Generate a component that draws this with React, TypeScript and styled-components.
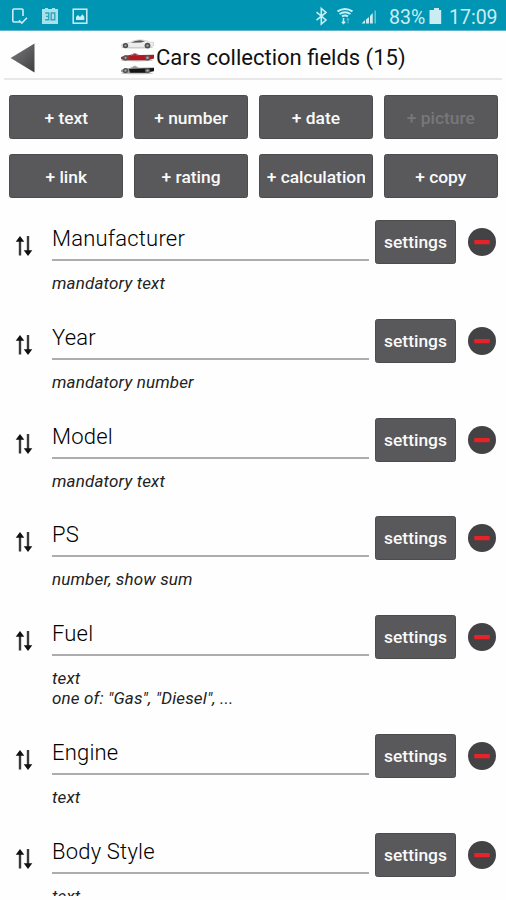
import React from "react";
import styled, { createGlobalStyle } from "styled-components";

const Global = createGlobalStyle`
  * { box-sizing: border-box; }
  html, body { margin: 0; padding: 0; background: #fefefe; }
  body { font-family: Roboto, "Liberation Sans", sans-serif; color: #111; }
`;

const Screen = styled.div`
  width: 506px;
  height: 900px;
  overflow: hidden;
  background: #fefefe;
`;

const StatusBar = styled.div`
  height: 31px;
  background: #0095b3;
  border-bottom: 1px solid #5fb5cc;
  display: flex;
  align-items: center;
  justify-content: space-between;
  padding: 2px 10px 0 11px;
  color: #c9edf3;
`;

const StatusGroup = styled.div<{ $gap: number }>`
  display: flex;
  align-items: center;
  gap: ${(p) => p.$gap}px;
`;

const StatusText = styled.span<{ $width: number }>`
  font-size: 19.5px;
  line-height: 28px;
  margin-top: 3px;
  width: ${(p) => p.$width}px;
  white-space: nowrap;
`;

const Header = styled.header`
  height: 49px;
  margin: 0 4px;
  border-bottom: 2px solid #e8e8e8;
  display: flex;
  align-items: center;
  padding-left: 6px;
`;

const BackIcon = styled.svg`
  display: block;
  width: 26px;
  height: 30px;
  margin-top: 6px;
`;

const Title = styled.h1`
  display: flex;
  align-items: center;
  gap: 1px;
  margin: 4px 0 0 84px;
  font-size: 22px;
  font-weight: 400;
  line-height: 36px;
  white-space: nowrap;
`;

const TitleText = styled.span`
  padding-top: 2px;
`;

const Actions = styled.div`
  display: grid;
  grid-template-columns: repeat(4, 1fr);
  gap: 15px 10.4px;
  padding: 15px 8px 0 9px;
`;

const Button = styled.button<{ $disabled?: boolean }>`
  display: block;
  min-width: 0;
  height: 44px;
  border: 1px solid #4c4c4e;
  border-radius: 2.5px;
  padding: 0 7px 0 7px;
  background: #59595b;
  color: ${(p) => (p.$disabled ? "#77777a" : "#fafafa")};
  font: 500 17.4px/44px Roboto, "Liberation Sans", sans-serif;
  text-align: center;
`;

const ButtonLabel = styled.span`
  display: block;
  overflow: hidden;
  white-space: nowrap;
`;

const FieldList = styled.div`
  height: 676px;
  margin-top: 22px;
  overflow: hidden;
`;

const FieldRow = styled.div<{ $tall?: boolean }>`
  display: grid;
  grid-template-columns: 36px 317px 81px 28px;
  column-gap: 6px;
  height: ${(p) => (p.$tall ? 118.75 : 98.75)}px;
  padding-left: 10px;
  align-items: start;
`;

const SortIcon = styled.svg`
  display: block;
  width: 18px;
  height: 22px;
  margin: 15px 0 0 5px;
`;

const FieldName = styled.div`
  height: 41px;
  border-bottom: 2px solid #adadad;
  font-size: 22px;
  font-weight: 300;
  line-height: 37px;
  letter-spacing: 0.2px;
  color: #000;
`;

const FieldNote = styled.div`
  margin-top: 12px;
  font-size: 17px;
  font-style: italic;
  line-height: 20px;
  letter-spacing: 0.15px;
  white-space: pre-line;
  color: #222;
`;

const SettingsButton = styled(Button)`
  padding: 0;
  line-height: 43px;
`;

const RemoveIcon = styled.svg`
  display: block;
  width: 30px;
  height: 30px;
  margin: 7px 0 0 5px;
`;

const CarsSvg = styled.svg`
  display: block;
  width: 35px;
  height: 36px;
  flex: none;
`;

function Car({ y, body, glass }: { y: number; body: string; glass: string }) {
  return (
    <g transform={`translate(0 ${y})`}>
      <ellipse cx="17" cy="8.3" rx="16" ry="1.1" fill="#999" opacity=".5" />
      <path d="M1 6 Q2 3.8 9 3.5 Q14 .5 20 .6 Q26 .8 30 3 L33.5 3 L33.5 6.5 L29 8.2 L3 8.2Z" fill={body} stroke="#b9b9b9" strokeWidth=".5" />
      <path d="M11 3.5 Q15 1 20 1 L25 2 L21 3.4Z" fill={glass} />
      <circle cx="5.5" cy="6.4" r="2.7" fill="#4d4d50" />
      <circle cx="5.5" cy="6.4" r="1.1" fill="#a5a5a5" />
      <circle cx="27.5" cy="6.4" r="2.9" fill="#4d4d50" />
      <circle cx="27.5" cy="6.4" r="1.2" fill="#a5a5a5" />
    </g>
  );
}

function LowCar({ y, body, trim }: { y: number; body: string; trim: string }) {
  return (
    <g transform={`translate(0 ${y})`}>
      <ellipse cx="17" cy="8" rx="16" ry="1" fill="#888" opacity=".5" />
      <path d="M1 4.7 Q5 2.7 10 2.7 L15 .7 L19 2.5 L34 2.3 L34 6 L28 7.8 L4 7.8 L1 6.5Z" fill={trim} />
      <path d="M9 3.8 L34 2.7 L34 5.7 L25 7.6 L10 7.6Z" fill={body} />
      <path d="M11 2.8 L15 .8 L18 2.8" fill="none" stroke="#aaa" strokeWidth=".9" />
      <circle cx="5.5" cy="5.4" r="2.6" fill="#555" />
      <circle cx="5.5" cy="5.4" r="1.1" fill="#aaa" />
      <circle cx="27.5" cy="5.4" r="2.7" fill="#555" />
      <circle cx="27.5" cy="5.4" r="1.2" fill="#aaa" />
    </g>
  );
}

const CarsIcon = () => (
  <CarsSvg viewBox="0 0 35 36">
    <Car y={0.2} body="#ededed" glass="#555" />
    <LowCar y={13.4} body="#b51622" trim="#933" />
    <LowCar y={26.2} body="#151517" trim="#999" />
  </CarsSvg>
);

const Sort = () => (
  <SortIcon viewBox="0 0 18 22" fill="none" stroke="#111" strokeWidth="2.4">
    <path d="M5 20.5V3M13 1V19" stroke="#3a3a3a" />
    <path d="M.7 6.8L5 1L9.3 6.8ZM8.7 15.2L13 21L17.3 15.2Z" fill="#111" stroke="none" />
  </SortIcon>
);

const Remove = () => (
  <RemoveIcon viewBox="0 0 30 30">
    <circle cx="15" cy="15" r="14" fill="#434345" />
    <rect x="7.2" y="13" width="15.6" height="4.2" rx=".8" fill="#e62328" />
  </RemoveIcon>
);

const actions = ["text", "number", "date", "picture", "link", "rating", "calculation", "copy"];

const fields = [
  { name: "Manufacturer", note: "mandatory text" },
  { name: "Year", note: "mandatory number" },
  { name: "Model", note: "mandatory text" },
  { name: "PS", note: "number, show sum" },
  { name: "Fuel", note: 'text\none of: "Gas", "Diesel", ...', tall: true },
  { name: "Engine", note: "text" },
  { name: "Body Style", note: "text" },
];

export default function App() {
  return (
    <Screen>
      <Global />
      <StatusBar>
        <StatusGroup $gap={13}>
          <svg width="17" height="17" viewBox="0 0 17 17" fill="none" stroke="currentColor" strokeWidth="1.6">
            <path d="M12 8V2.2Q12 1 10.8 1H3Q1.8 1 1.8 2.2V12.8Q1.8 14 3 14H9" />
            <path d="M8 12.2L10.8 15L16 9.8" />
          </svg>
          <svg width="18" height="17" viewBox="0 0 18 17">
            <path d="M1 1H4V0H7V1H11V0H14V1H17V16H1Z" fill="#a9e0e9" />
            <path d="M4.2 5H7.7V11.8H4.2M5 8.4H7.7M10.2 5H13.8V11.8H10.2Z" fill="none" stroke="#2fa6bd" strokeWidth="1.4" />
          </svg>
          <svg width="16" height="17" viewBox="0 0 16 17">
            <rect x="1.2" y="1.2" width="13.6" height="14" fill="none" stroke="currentColor" strokeWidth="1.5" />
            <path d="M4 12V9L6 7L8 9L10.5 6.3L12.3 8.7V12Z" fill="currentColor" />
          </svg>
        </StatusGroup>
        <StatusGroup $gap={0}>
          <svg width="74" height="20" viewBox="0 0 74 20" fill="none" stroke="currentColor" strokeWidth="1.6">
            <path d="M1.5 6.2L11 14L6.3 18V2.4L11 6.4L1.5 14.2" />
            <path d="M22.5 5.3Q30 .5 37.5 5.3M24.5 8Q30 4.3 35.5 8M27 10.3Q30 8.5 33 10.3" strokeWidth="2" />
            <path d="M28.5 12V17.5M26.8 15.7L28.5 17.5L30.2 15.7" strokeWidth="1.5" />
            <path d="M33 17.5V12.5M31.7 13.8L33 12.5L34.3 13.8" strokeWidth="1" opacity=".5" />
            <path d="M46.5 17.5L50 14V17.5ZM51 13.5L54 11V17.5H51ZM55 10L57.8 7V17.5H55Z" fill="currentColor" stroke="none" />
            <path d="M60.2 4.5V17.5" opacity=".5" />
          </svg>
          <StatusText $width={38}>83%</StatusText>
          <svg width="22" height="20" viewBox="0 0 22 20" fill="currentColor">
            <path d="M5 4H7V2H12V4H14.2V18H2.5V4Z" />
          </svg>
          <StatusText $width={47}>17:09</StatusText>
        </StatusGroup>
      </StatusBar>
      <Header>
        <BackIcon viewBox="0 0 26 30">
          <defs>
            <linearGradient id="back" x1="0" y1="0" x2="1" y2="1">
              <stop offset=".3" stopColor="#6b6b6d" />
              <stop offset="1" stopColor="#3e3e40" />
            </linearGradient>
          </defs>
          <path d="M.6 15L24.5 .6V29.4Z" fill="url(#back)" />
        </BackIcon>
        <Title>
          <CarsIcon />
          <TitleText>Cars collection fields (15)</TitleText>
        </Title>
      </Header>
      <Actions>
        {actions.map((a) => (
          <Button key={a} $disabled={a === "picture"}>
            <ButtonLabel>+ {a}</ButtonLabel>
          </Button>
        ))}
      </Actions>
      <FieldList>
        {fields.map((f) => (
          <FieldRow key={f.name} $tall={f.tall}>
            <Sort />
            <div>
              <FieldName>{f.name}</FieldName>
              <FieldNote>{f.note}</FieldNote>
            </div>
            <SettingsButton>
              <ButtonLabel>settings</ButtonLabel>
            </SettingsButton>
            <Remove />
          </FieldRow>
        ))}
      </FieldList>
    </Screen>
  );
}
